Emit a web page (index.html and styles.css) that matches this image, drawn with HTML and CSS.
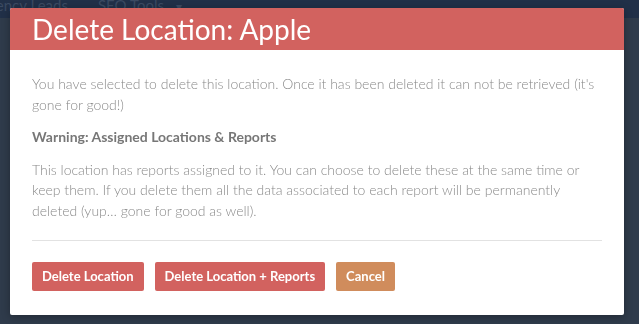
FILE: index.html
```html
<!DOCTYPE html>
<html lang="en">
<head>
  <meta charset="UTF-8">
  <title>Delete Location</title>
  <link rel="stylesheet" href="styles.css">
</head>
<body>
  <div class="topbar">
    <span>Agency Leads</span>
    <span>SEO Tools <span class="caret">&#9662;</span></span>
  </div>
  <div class="backdrop">
    <div class="modal">
      <div class="modal-head">
        <h2>Delete Location: Apple</h2>
      </div>
      <div class="modal-body">
        <p>You have selected to delete this location. Once it has been deleted it can not be retrieved (it's gone for good!)</p>
        <p class="warn">Warning: Assigned Locations &amp; Reports</p>
        <p>This location has reports assigned to it. You can choose to delete these at the same time or keep them. If you delete them all the data associated to each report will be permanently deleted (yup… gone for good as well).</p>
        <hr>
        <div class="actions">
          <a href="#" class="btn btn-red">Delete Location</a>
          <a href="#" class="btn btn-red">Delete Location + Reports</a>
          <a href="#" class="btn btn-orange">Cancel</a>
        </div>
      </div>
    </div>
  </div>
</body>
</html>
```

FILE: styles.css
```css
body {
  margin: 0;
  height: 324px;
  background: #2f3b4b;
  font-family: 'Lato', Arial, sans-serif;
  overflow: hidden;
}
.topbar {
  height: 18px;
  background: #213048;
  display: flex;
  gap: 30px;
  margin-left: -22px;
  font-size: 15px;
  line-height: 10px;
  color: #3b4a62;
  overflow: hidden;
}
.caret {
  margin-left: 8px;
  font-size: 12px;
}
.backdrop {
  position: fixed;
  top: 0; left: 0; right: 0; bottom: 0;
}
.modal {
  position: absolute;
  top: 8px;
  left: 10px;
  width: 614px;
  height: 307px;
  background: #fff;
  border-radius: 2px;
  box-shadow: 0 2px 8px rgba(0,0,0,0.3);
  overflow: hidden;
}
.modal-head {
  background: #d2625f;
  height: 42px;
  display: flex;
  align-items: center;
  padding-left: 22px;
}
.modal-head h2 {
  margin: 0;
  color: #fff;
  font-size: 28px;
  font-weight: 400;
}
.modal-body {
  padding: 24px 22px 0 22px;
}
.modal-body p {
  margin: 0 0 12px 0;
  font-size: 14px;
  line-height: 20.5px;
  font-weight: 300;
  color: #8a8a8a;
}
.modal-body p.warn {
  font-weight: 700;
  color: #777;
}
hr {
  border: none;
  border-top: 1px solid #e2e2e2;
  margin: 19px 0 21px 0;
}
.actions {
  display: flex;
  gap: 11px;
}
.btn {
  background: #d2625f;
  color: #fff;
  text-decoration: none;
  font-size: 13px;
  font-weight: 700;
  height: 29px;
  line-height: 29px;
  padding: 0 10px;
  border-radius: 2px;
}
.btn-orange {
  background: #d08c5c;
}
```
